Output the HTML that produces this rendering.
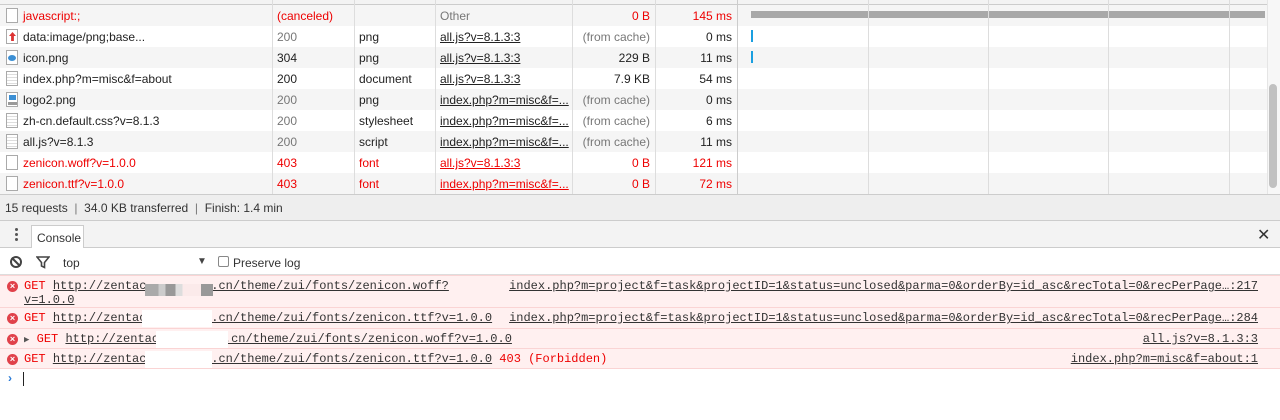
<!DOCTYPE html>
<html><head><meta charset="utf-8"><style>
*{margin:0;padding:0;box-sizing:border-box}
body{width:1280px;height:420px;overflow:hidden;background:#fff;font-family:"Liberation Sans",sans-serif;font-size:12px;color:#222;position:relative}
.a{position:absolute}
.row{position:absolute;left:0;width:1267px;height:21px}
.row span{position:absolute;top:4px;white-space:nowrap}
.red{color:#e00}
.g{color:#777}
.vl{position:absolute;top:0;width:1px;background:#ddd;height:194px}
.ico{position:absolute;left:6px;top:3px;width:12px;height:15px;border:1px solid #aaa;background:#fff}
u{text-decoration:underline}
.mono{font-family:"Liberation Mono",monospace;font-size:12px}
.msg{position:absolute;left:0;width:1280px;background:#fff0f0;border-bottom:1px solid #fad4d4}
.msg .x{position:absolute;left:7px;top:5px;width:11px;height:11px;border-radius:50%;background:#e0414a;color:#fff;font-size:9px;line-height:11px;text-align:center;font-family:"Liberation Sans",sans-serif;font-weight:bold}
.msg .t{position:absolute;left:24px;top:3px;white-space:pre;color:#e00}
.msg .t u{color:#333}
.msg .r{position:absolute;right:22px;top:3px;color:#333;white-space:pre}
.blur{position:absolute;background:#fff}
</style></head><body>
<div class="a" style="left:0;top:0;width:1267px;height:5px;background:#f3f3f3;border-bottom:1px solid #ccc"></div>
<div class="row" style="top:5px;background:#f5f5f5"><div class="ico"></div><span class="red" style="left:23px">javascript:;</span><span class="red" style="left:277px">(canceled)</span><span class="g" style="left:440px">Other</span><span class="red" style="left:572px;width:78px;text-align:right">0 B</span><span class="red" style="left:680px;width:52px;text-align:right">145 ms</span><div class="a" style="left:751px;top:6px;width:514px;height:7px;background:#a8a8a8"></div></div>
<div class="row" style="top:26px"><div class="ico" style="border-color:#aaa"><div class="a" style="left:2px;top:2px;width:7px;height:9px;background:#d33;clip-path:polygon(50% 0,100% 45%,70% 45%,70% 100%,30% 100%,30% 45%,0 45%)"></div></div><span style="left:23px">data:image/png;base...</span><span class="g" style="left:277px">200</span><span style="left:359px">png</span><span style="left:440px"><u>all.js?v=8.1.3:3</u></span><span class="g" style="left:572px;width:78px;text-align:right">(from cache)</span><span style="left:680px;width:52px;text-align:right">0 ms</span><div class="a" style="left:751px;top:4px;width:2px;height:12px;background:#1a9fe0"></div></div>
<div class="row" style="top:47px;background:#f5f5f5"><div class="ico"><div class="a" style="left:1px;top:4px;width:8px;height:6px;border-radius:50%;background:#3b8fd4"></div></div><span style="left:23px">icon.png</span><span style="left:277px">304</span><span style="left:359px">png</span><span style="left:440px"><u>all.js?v=8.1.3:3</u></span><span style="left:572px;width:78px;text-align:right">229 B</span><span style="left:680px;width:52px;text-align:right">11 ms</span><div class="a" style="left:751px;top:4px;width:2px;height:12px;background:#1a9fe0"></div></div>
<div class="row" style="top:68px"><div class="ico" style="background:repeating-linear-gradient(#fff 0 2px,#ddd 2px 3px)"></div><span style="left:23px">index.php?m=misc&amp;f=about</span><span style="left:277px">200</span><span style="left:359px">document</span><span style="left:440px"><u>all.js?v=8.1.3:3</u></span><span style="left:572px;width:78px;text-align:right">7.9 KB</span><span style="left:680px;width:52px;text-align:right">54 ms</span></div>
<div class="row" style="top:89px;background:#f5f5f5"><div class="ico"><div class="a" style="left:2px;top:2px;width:7px;height:5px;background:#3b8fd4"></div><div class="a" style="left:1px;top:9px;width:9px;height:3px;background:#999"></div></div><span style="left:23px">logo2.png</span><span class="g" style="left:277px">200</span><span style="left:359px">png</span><span style="left:440px"><u>index.php?m=misc&amp;f=...</u></span><span class="g" style="left:572px;width:78px;text-align:right">(from cache)</span><span style="left:680px;width:52px;text-align:right">0 ms</span></div>
<div class="row" style="top:110px"><div class="ico" style="background:repeating-linear-gradient(#fff 0 2px,#ddd 2px 3px)"></div><span style="left:23px">zh-cn.default.css?v=8.1.3</span><span class="g" style="left:277px">200</span><span style="left:359px">stylesheet</span><span style="left:440px"><u>index.php?m=misc&amp;f=...</u></span><span class="g" style="left:572px;width:78px;text-align:right">(from cache)</span><span style="left:680px;width:52px;text-align:right">6 ms</span></div>
<div class="row" style="top:131px;background:#f5f5f5"><div class="ico" style="background:repeating-linear-gradient(#fff 0 2px,#ddd 2px 3px)"></div><span style="left:23px">all.js?v=8.1.3</span><span class="g" style="left:277px">200</span><span style="left:359px">script</span><span style="left:440px"><u>index.php?m=misc&amp;f=...</u></span><span class="g" style="left:572px;width:78px;text-align:right">(from cache)</span><span style="left:680px;width:52px;text-align:right">11 ms</span></div>
<div class="row" style="top:152px"><div class="ico"></div><span class="red" style="left:23px">zenicon.woff?v=1.0.0</span><span class="red" style="left:277px">403</span><span class="red" style="left:359px">font</span><span class="red" style="left:440px"><u>all.js?v=8.1.3:3</u></span><span class="red" style="left:572px;width:78px;text-align:right">0 B</span><span class="red" style="left:680px;width:52px;text-align:right">121 ms</span></div>
<div class="row" style="top:173px;background:#f5f5f5"><div class="ico"></div><span class="red" style="left:23px">zenicon.ttf?v=1.0.0</span><span class="red" style="left:277px">403</span><span class="red" style="left:359px">font</span><span class="red" style="left:440px"><u>index.php?m=misc&amp;f=...</u></span><span class="red" style="left:572px;width:78px;text-align:right">0 B</span><span class="red" style="left:680px;width:52px;text-align:right">72 ms</span></div>
<div class="vl" style="left:272px"></div><div class="vl" style="left:354px"></div><div class="vl" style="left:435px"></div><div class="vl" style="left:572px"></div><div class="vl" style="left:655px"></div><div class="vl" style="left:737px;background:#ccc"></div><div class="vl" style="left:868px"></div><div class="vl" style="left:988px"></div><div class="vl" style="left:1108px"></div><div class="vl" style="left:1229px"></div>
<div class="a" style="left:1267px;top:0;width:13px;height:194px;background:#f7f7f7;border-left:1px solid #e5e5e5"></div>
<div class="a" style="left:1269px;top:84px;width:8px;height:104px;border-radius:4px;background:#c1c1c1"></div>
<div class="a" style="left:0;top:194px;width:1280px;height:27px;background:#eee;border-top:1px solid #ccc;border-bottom:1px solid #ccc"></div>
<div class="a" style="left:5px;top:201px;color:#333;white-space:pre">15 requests  <span style="color:#777">|</span>  34.0 KB transferred  <span style="color:#777">|</span>  Finish: 1.4 min</div>
<div class="a" style="left:0;top:221px;width:1280px;height:27px;background:#f3f3f3;border-bottom:1px solid #ccc"></div>
<div class="a" style="left:15px;top:228px;width:3px;height:3px;background:#555;border-radius:50%;box-shadow:0 5px 0 #555,0 10px 0 #555"></div>
<div class="a" style="left:31px;top:225px;width:53px;height:23px;background:#fff;border:1px solid #ccc;border-bottom:none;padding:5px 0 0 5px;color:#333">Console</div>
<div class="a" style="left:1257px;top:225px;font-size:16px;color:#333">✕</div>
<div class="a" style="left:0;top:248px;width:1280px;height:27px;border-bottom:1px solid #ddd"></div>
<div class="a" style="left:10px;top:256px;width:12px;height:12px;border:2px solid #444;border-radius:50%"></div>
<div class="a" style="left:15px;top:256px;width:2px;height:12px;background:#444;transform:rotate(-45deg)"></div>
<svg class="a" style="left:36px;top:255px" width="14" height="14"><path d="M1 2H13L8.5 7.5V12.5L5.5 11V7.5Z" fill="none" stroke="#444" stroke-width="1.6"/></svg>
<div class="a" style="left:63px;top:256px;color:#333">top</div>
<div class="a" style="left:197px;top:256px;font-size:10px;color:#444">▼</div>
<div class="a" style="left:218px;top:256px;width:11px;height:11px;border:1px solid #888;border-radius:2px;background:#fff"></div>
<div class="a" style="left:233px;top:256px;color:#333">Preserve log</div>
<div class="msg mono" style="top:275px;height:33px;border-top:1px solid #fad4d4"><div class="x">×</div><div class="t">GET <u>http://zentac         .cn/theme/zui/fonts/zenicon.woff?</u>
<u>v=1.0.0</u></div><div class="r"><u>index.php?m=project&amp;f=task&amp;projectID=1&amp;status=unclosed&amp;parma=0&amp;orderBy=id_asc&amp;recTotal=0&amp;recPerPage…:217</u></div></div>
<div class="a" style="left:145px;top:284px;width:68px;height:12px;background:linear-gradient(90deg,#aaa 0 20%,#ccc 20% 30%,#999 30% 45%,#ddd 45% 55%,#fbeaea 55% 82%,#999 82%)"></div>
<div class="msg mono" style="top:308px;height:21px"><div class="x">×</div><div class="t">GET <u>http://zentac         .cn/theme/zui/fonts/zenicon.ttf?v=1.0.0</u></div><div class="r"><u>index.php?m=project&amp;f=task&amp;projectID=1&amp;status=unclosed&amp;parma=0&amp;orderBy=id_asc&amp;recTotal=0&amp;recPerPage…:284</u></div></div>
<div class="msg mono" style="top:329px;height:20px"><div class="x">×</div><div class="t"><span style="color:#555;font-size:9px">▶</span> GET <u>http://zentac         .cn/theme/zui/fonts/zenicon.woff?v=1.0.0</u></div><div class="r"><u>all.js?v=8.1.3:3</u></div></div>
<div class="msg mono" style="top:349px;height:20px"><div class="x">×</div><div class="t">GET <u>http://zentac         .cn/theme/zui/fonts/zenicon.ttf?v=1.0.0</u> 403 (Forbidden)</div><div class="r"><u>index.php?m=misc&amp;f=about:1</u></div></div>
<div class="blur" style="left:142px;top:310px;width:70px;height:17px"></div>
<div class="blur" style="left:156px;top:331px;width:72px;height:17px"></div>
<div class="blur" style="left:145px;top:351px;width:67px;height:17px"></div>
<div class="a" style="left:8px;top:371px;color:#2a7ad7;font-size:12px;font-weight:bold">›</div>
<div class="a" style="left:23px;top:372px;width:1px;height:14px;background:#222"></div>
</body></html>
